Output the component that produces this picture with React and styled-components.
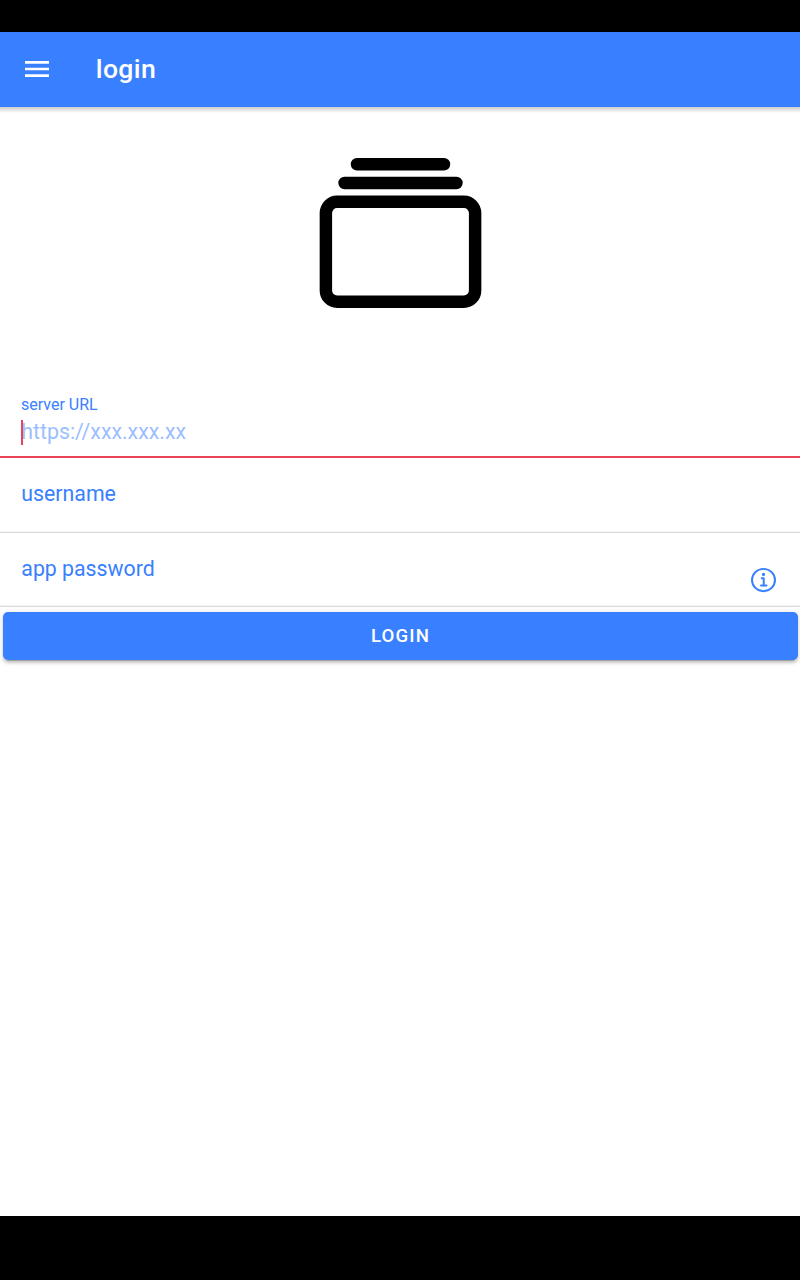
import React from "react";
import styled, { createGlobalStyle } from "styled-components";

const BLUE = "#3880ff";
const RED = "#eb445a";

const GlobalStyle = createGlobalStyle`
  *, *::before, *::after { box-sizing: border-box; }
  body { margin: 0; background: #000; font-family: Roboto, sans-serif; }
`;

const Screen = styled.div`
  display: flex;
  flex-direction: column;
  width: 800px;
  height: 1280px;
  padding: 32px 0 64px;
  background: #000;
`;

const Toolbar = styled.header`
  display: flex;
  flex: none;
  align-items: center;
  height: 75px;
  padding: 0 0 1px 21px;
  background: ${BLUE};
  color: #fff;
`;

const IconButton = styled.button`
  display: flex;
  padding: 0;
  border: 0;
  background: none;
  color: inherit;
`;

const Icon = styled.svg`
  display: block;
  flex: none;
  width: ${(p) => p.$width}px;
  height: ${(p) => p.$height}px;
`;

const Title = styled.h1`
  margin: 0 0 0 42.8px;
  font-size: 26.6px;
  font-weight: 500;
  line-height: 32px;
  letter-spacing: 0.35px;
`;

const Content = styled.main`
  display: flex;
  flex: 1;
  flex-direction: column;
  background: linear-gradient(rgba(0, 0, 0, 0.2), rgba(0, 0, 0, 0.1) 50%, transparent) 0 0 / 100% 6px no-repeat #fff;
`;

const Hero = styled.div`
  display: flex;
  flex: none;
  justify-content: center;
  height: 276px;
  padding: 26px 0 0 1px;
`;

const Field = styled.div`
  display: flex;
  flex: none;
  flex-direction: column;
  height: ${(p) => p.$height}px;
  padding: ${(p) => p.$top}px 20px 0 21.3px;
  border-bottom: ${(p) => (p.$focused ? `2px solid ${RED}` : "1px solid #dadada")};
  box-shadow: ${(p) => (p.$focused ? "none" : "inset 0 -1px #f4f4f4")};
  color: ${BLUE};
  font-size: 21.3px;
  line-height: 25px;
`;

const FloatingLabel = styled.span`
  height: 20px;
  margin-left: -0.3px;
  font-size: 16px;
  line-height: 19px;
`;

const InputLine = styled.span`
  position: relative;
  height: 25px;
  margin-top: 5px;
  line-height: 23px;
`;

const Placeholder = styled.span`
  opacity: 0.5;
`;

const Caret = styled.span`
  position: absolute;
  left: -0.3px;
  top: 0;
  width: 2px;
  height: 25px;
  background: ${RED};
`;

const FieldRow = styled.span`
  display: flex;
  justify-content: space-between;
`;

const InfoButton = styled(IconButton)`
  margin-top: 9px;
`;

const LoginButton = styled.button`
  flex: none;
  height: 48px;
  margin: 5px 2px 0 3px;
  padding: 0;
  border: 0;
  border-radius: 5px;
  background: ${BLUE};
  color: #fff;
  font: 500 18.6px/48px Roboto, sans-serif;
  letter-spacing: 1.12px;
  text-transform: uppercase;
  box-shadow:
    0 4px 1px -3px rgba(0, 0, 0, 0.2),
    0 2.7px 2.7px 0 rgba(0, 0, 0, 0.14),
    0 1.3px 6.6px 0 rgba(0, 0, 0, 0.12);
`;

function MenuIcon() {
  return (
    <Icon $width={32} $height={32} viewBox="0 0 512 512" fill="currentColor">
      <path d="M64 384h384v-42.67H64zm0-106.67h384v-42.66H64zM64 128v42.67h384V128z" />
    </Icon>
  );
}

function AlbumsIcon() {
  return (
    <Icon
      $width={199}
      $height={200}
      viewBox="0 0 512 512"
      preserveAspectRatio="none"
      fill="none"
      stroke="#000"
      strokeWidth="32"
    >
      <rect x="64" y="176" width="384" height="256" rx="28.87" ry="28.87" strokeLinejoin="round" />
      <path d="M144 80h224M112 128h288" strokeLinecap="round" />
    </Icon>
  );
}

function InfoIcon() {
  return (
    <Icon
      $width={32}
      $height={31}
      viewBox="0 0 512 512"
      preserveAspectRatio="none"
      fill="none"
      stroke={BLUE}
      strokeWidth="32"
    >
      <circle cx="248" cy="248" r="184" />
      <path d="M220 220h32v116" strokeLinecap="round" strokeLinejoin="round" />
      <path d="M208 340h88" strokeLinecap="round" />
      <circle cx="248" cy="156" r="26" fill={BLUE} stroke="none" />
    </Icon>
  );
}

export default function App() {
  return (
    <>
      <GlobalStyle />
      <Screen>
        <Toolbar>
          <IconButton aria-label="menu"><MenuIcon /></IconButton>
          <Title>login</Title>
        </Toolbar>
        <Content>
          <Hero><AlbumsIcon /></Hero>
          <Field $height={75} $top={12} $focused>
            <FloatingLabel>server URL</FloatingLabel>
            <InputLine>
              <Placeholder>https://xxx.xxx.xx</Placeholder>
              <Caret />
            </InputLine>
          </Field>
          <Field $height={75} $top={23}>
            <FieldRow>username</FieldRow>
          </Field>
          <Field $height={74} $top={23}>
            <FieldRow>
              app password
              <InfoButton aria-label="info"><InfoIcon /></InfoButton>
            </FieldRow>
          </Field>
          <LoginButton>login</LoginButton>
        </Content>
      </Screen>
    </>
  );
}
